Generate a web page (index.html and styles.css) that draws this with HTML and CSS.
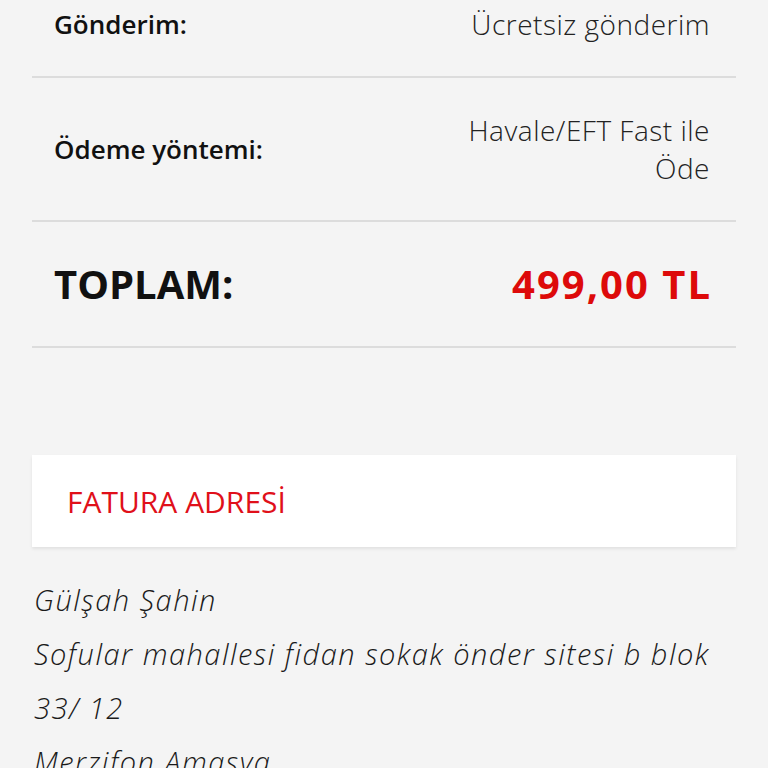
FILE: index.html
```html
<!DOCTYPE html>
<html lang="tr">
<head>
    <meta charset="UTF-8" />
    <meta name="viewport" content="width=device-width, initial-scale=1.0" />
    <title>Sipariş</title>
    <link rel="stylesheet" href="styles.css">
</head>
<body>
    <main class="order">
        <section class="summary">
            <div class="row">
                <span class="label">Gönderim:</span>
                <span class="value">Ücretsiz gönderim</span>
            </div>
            <div class="row">
                <span class="label">Ödeme yöntemi:</span>
                <span class="value">Havale/EFT Fast ile Öde</span>
            </div>
            <div class="row total">
                <span class="label">TOPLAM:</span>
                <span class="value">499,00 TL</span>
            </div>
        </section>
        <section class="address">
            <h2 class="address-title">FATURA ADRESİ</h2>
            <address class="address-body">
                <p>Gülşah Şahin</p>
                <p>Sofular mahallesi fidan sokak önder sitesi b blok 33/ 12</p>
                <p>Merzifon Amasya</p>
            </address>
        </section>
    </main>
</body>
</html>
```

FILE: styles.css
```css
body {
    font-family: 'Open Sans', 'Noto Sans', sans-serif;
    margin: 0;
    background-color: #f4f4f4;
    color: #111;
}

.order {
    padding: 0 32px;
}

.summary {
    margin-top: -28px;
}

.row {
    display: flex;
    justify-content: space-between;
    align-items: center;
    padding: 33px 26px 33px 22px;
    border-bottom: 2px solid #dcdcdc;
}

.label {
    font-size: 26px;
    font-weight: 600;
    line-height: 38px;
}

.value {
    font-size: 28px;
    font-weight: 300;
    letter-spacing: 0.5px;
    line-height: 38px;
    text-align: right;
    max-width: 260px;
    color: #222;
}

.total {
    padding-top: 43px;
    padding-bottom: 43px;
}

.total .label,
.total .value {
    font-size: 40px;
    font-weight: 700;
    max-width: none;
}

.total .value {
    color: #dd0a0a;
    letter-spacing: 2px;
    margin-right: -2px;
}

/* Адрес */
.address {
    margin-top: 107px;
}

.address-title {
    margin: 0;
    background-color: #fff;
    padding: 0 35px;
    height: 92px;
    display: flex;
    align-items: center;
    font-size: 30px;
    font-weight: 400;
    color: #e0101a;
    box-shadow: 0 2px 3px rgba(0, 0, 0, 0.08);
}

.address-body {
    margin-top: 26px;
    padding: 0 2px;
    font-style: italic;
    font-weight: 300;
    font-size: 29px;
    letter-spacing: 1.5px;
    line-height: 54px;
    color: #1a1a1a;
}

.address-body p {
    margin: 0;
}
```
